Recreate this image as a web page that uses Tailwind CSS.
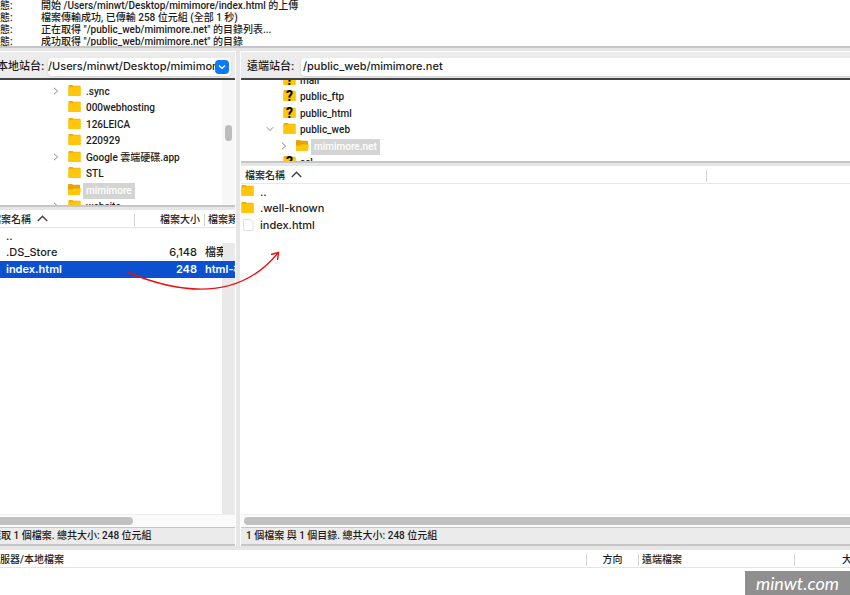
<!DOCTYPE html>
<html lang="zh-Hant">
<head>
    <meta charset="UTF-8">
    <meta name="viewport" content="width=device-width, initial-scale=1.0">
    <title>FileZilla</title>
    <script src="https://cdn.jsdelivr.net/npm/@tailwindcss/browser@4"></script>
</head>
<body class="h-screen overflow-hidden bg-white font-['Roboto','Noto_Sans_CJK_TC',sans-serif] text-[10px] font-medium text-[#1c1c1c]">
    <!-- icons -->
    <svg class="hidden">
        <symbol id="folder" viewBox="0 0 12 12">
            <path d="M0 .8Q0 0 .8 0H4L5 .8H11.400Q12 .8 12 1.400V10.600Q12 11 11.600 11H.4Q0 11 0 10.600Z" fill="#f0b000"/>
            <path d="M0 2.200H4.400L5.400 1.500H12V10.600Q12 11 11.600 11H.4Q0 11 0 10.600Z" fill="#ffc60a"/>
        </symbol>
        <symbol id="folder-open" viewBox="0 0 13 12">
            <path d="M0 .8Q0 0 .8 0H4L5 .8H11.400Q12 .8 12 1.400V11H0Z" fill="#e5a50a"/>
            <path d="M0 5.500H4.600L5.600 4.500H13L12 10.500Q11.900 11 11.400 11H.4Q0 11 0 10.600Z" fill="#ffc60a"/>
        </symbol>
        <symbol id="right" viewBox="0 0 8 8">
            <path d="M2 .8L5.6 4L2 7.2" fill="none" stroke="#8a8a8a" stroke-width="1"/>
        </symbol>
        <symbol id="down" viewBox="0 0 8 8">
            <path d="M.8 2.2L4 5.6L7.2 2.2" fill="none" stroke="#8a8a8a" stroke-width="1"/>
        </symbol>
        <symbol id="sort" viewBox="0 0 11 7">
            <path d="M.8 6L5.5 1.2L10.2 6" fill="none" stroke="#444" stroke-width="1.5"/>
        </symbol>
    </svg>

    <main class="-mr-4 -ml-2.5 flex h-full flex-col">
        <!-- log -->
        <ul class="h-[46px] shrink-0 overflow-hidden leading-3">
            <li class="flex"><span class="w-[51px]">狀態:</span>開始 /Users/minwt/Desktop/mimimore/index.html 的上傳</li>
            <li class="flex"><span class="w-[51px]">狀態:</span>檔案傳輸成功, 已傳輸 258 位元組 (全部 1 秒)</li>
            <li class="flex"><span class="w-[51px]">狀態:</span>正在取得 "/public_web/mimimore.net" 的目錄列表...</li>
            <li class="flex"><span class="w-[51px]">狀態:</span>成功取得 "/public_web/mimimore.net" 的目錄</li>
        </ul>

        <div class="flex min-h-0 flex-1 border-t-2 border-[#c6c6c6] bg-[#e6e6e6] pt-[3px]">
            <!-- local -->
            <section class="flex w-[246px] shrink-0 flex-col border-r border-white">
                <div class="flex h-[27px] shrink-0 items-center border-t border-white bg-[#ececec] pt-[3px] font-['Inter','Noto_Sans_CJK_TC',sans-serif] text-[11px]">
                    <label for="local" class="w-[56px] shrink-0 pl-[7px] whitespace-nowrap">本地站台:</label>
                    <div class="relative ml-0.5 h-[18px] w-[183px] rounded bg-white shadow-sm">
                        <select id="local" class="h-full w-[170px] appearance-none overflow-hidden bg-transparent text-[11px]">
                            <option>/Users/minwt/Desktop/mimimore</option>
                        </select>
                        <span class="pointer-events-none absolute top-0.5 right-0.5 flex size-3.5 items-center justify-center rounded bg-[#0a7aff]">
                            <svg class="size-2" viewBox="0 0 8 8"><path d="M1 2.6L4 5.4L7 2.6" fill="none" stroke="#fff" stroke-width="1.4"/></svg>
                        </span>
                    </div>
                </div>
                <div class="flex h-[129px] shrink-0 overflow-hidden border-t-2 border-b-2 border-t-[#444] border-b-[#c6c6c6] bg-white">
                    <ul class="flex h-[135px] flex-1 flex-col justify-between pt-1 pl-[62px] leading-4">
                        <li class="flex h-4 items-center"><svg class="mr-2 mb-0.5 size-2"><use href="#right"/></svg><svg class="mr-[5px] mb-0.5 h-3 w-[13px]"><use href="#folder"/></svg>.sync</li>
                        <li class="flex h-4 items-center pl-4"><svg class="mr-[5px] mb-0.5 h-3 w-[13px]"><use href="#folder"/></svg>000webhosting</li>
                        <li class="flex h-4 items-center pl-4"><svg class="mr-[5px] mb-0.5 h-3 w-[13px]"><use href="#folder"/></svg>126LEICA</li>
                        <li class="flex h-4 items-center pl-4"><svg class="mr-[5px] mb-0.5 h-3 w-[13px]"><use href="#folder"/></svg>220929</li>
                        <li class="flex h-4 items-center"><svg class="mr-2 mb-0.5 size-2"><use href="#right"/></svg><svg class="mr-[5px] mb-0.5 h-3 w-[13px]"><use href="#folder"/></svg>Google 雲端硬碟.app</li>
                        <li class="flex h-4 items-center pl-4"><svg class="mr-[5px] mb-0.5 h-3 w-[13px]"><use href="#folder"/></svg>STL</li>
                        <li class="flex h-4 items-center pl-4"><svg class="mr-0.5 mb-0.5 h-3 w-[13px]"><use href="#folder-open"/></svg><span class="bg-[#d4d4d4] px-[3px] text-white">mimimore</span></li>
                        <li class="flex h-4 items-center"><svg class="mr-2 mb-0.5 size-2"><use href="#right"/></svg><svg class="mr-[5px] mb-0.5 h-3 w-[13px]"><use href="#folder"/></svg>website</li>
                    </ul>
                    <div class="w-[13px] bg-[#f7f7f7] px-[3px] pt-[45px]"><div class="h-4 rounded-full bg-[#bcbcbc]"></div></div>
                </div>
                <div class="relative mt-[3px] flex-1 overflow-hidden bg-white">
                    <div class="absolute top-[33px] right-0 bottom-0 w-[13px] bg-[#e9e9e9]"></div>
                    <table class="relative w-full table-fixed text-left whitespace-nowrap">
                        <thead>
                            <tr class="h-[17px] border-b border-[#e4e4e4] bg-white">
                                <th class="w-[145px] pt-[3px] pl-px font-medium"><div class="flex items-center gap-1.5 border-r border-[#d4d4d4] leading-3">檔案名稱 <svg class="mb-0.5 h-[7px] w-[11px]"><use href="#sort"/></svg></div></th>
                                <th class="w-[70px] pt-[3px] text-right font-medium"><div class="border-r border-[#d4d4d4] pr-1 leading-3">檔案大小</div></th>
                                <th class="overflow-hidden pt-[3px] pl-[3px] leading-3 font-medium">檔案類型</th>
                            </tr>
                        </thead>
                        <tbody class="font-['Inter','Noto_Sans_CJK_TC',sans-serif] text-[11px]">
                            <tr class="h-[17px]"><td class="pl-4">..</td><td></td><td></td></tr>
                            <tr class="h-[17px]"><td class="pl-4">.DS_Store</td><td class="pr-2 text-right">6,148</td><td><div class="w-[18px] overflow-hidden">檔案</div></td></tr>
                            <tr class="h-[17px] bg-[#0a50d0] font-semibold text-white"><td class="pl-4">index.html</td><td class="pr-2 text-right">248</td><td class="overflow-hidden">html-檔案</td></tr>
                        </tbody>
                    </table>
                </div>
                <div class="h-[13px] shrink-0 border-t border-[#ececec] bg-[#fafafa] pt-0.5"><div class="h-2 w-[143px] rounded-full bg-[#c1c1c1]"></div></div>
                <p class="h-[19px] shrink-0 border-t border-b-2 border-[#c6c6c6] bg-[#ebebeb] pl-px leading-4">選取 1 個檔案. 總共大小: 248 位元組</p>
            </section>

            <!-- remote -->
            <section class="ml-1 flex min-w-0 flex-1 flex-col border-l border-white">
                <div class="flex h-[27px] shrink-0 items-center border-t border-white bg-[#ececec] pt-[3px] font-['Inter','Noto_Sans_CJK_TC',sans-serif] text-[11px]">
                    <label for="remote" class="w-[60px] shrink-0 pl-1.5 whitespace-nowrap">遠端站台:</label>
                    <select id="remote" class="h-[18px] flex-1 appearance-none rounded bg-white pl-0.5 text-[11px] shadow-sm">
                        <option>/public_web/mimimore.net</option>
                    </select>
                </div>
                <div class="h-[85px] shrink-0 overflow-hidden border-t-2 border-b-2 border-t-[#444] border-b-[#c6c6c6] bg-white">
                    <ul class="-mt-[7px] flex h-[98px] flex-col justify-between pl-[25px] leading-4">
                        <li class="flex h-4 items-center pl-[17px]"><span class="relative mr-1 mb-0.5 flex"><svg class="h-3 w-[13px]"><use href="#folder"/></svg><b class="absolute inset-0 text-center text-sm leading-3 text-black">?</b></span>mail</li>
                        <li class="flex h-4 items-center pl-[17px]"><span class="relative mr-1 mb-0.5 flex"><svg class="h-3 w-[13px]"><use href="#folder"/></svg><b class="absolute inset-0 text-center text-sm leading-3 text-black">?</b></span>public_ftp</li>
                        <li class="flex h-4 items-center pl-[17px]"><span class="relative mr-1 mb-0.5 flex"><svg class="h-3 w-[13px]"><use href="#folder"/></svg><b class="absolute inset-0 text-center text-sm leading-3 text-black">?</b></span>public_html</li>
                        <li class="flex h-4 items-center"><svg class="mr-[9px] mb-0.5 size-2"><use href="#down"/></svg><svg class="mr-1 mb-0.5 h-3 w-[13px]"><use href="#folder"/></svg>public_web</li>
                        <li class="flex h-4 items-center pl-3.5"><svg class="mr-2 mb-0.5 size-2"><use href="#right"/></svg><svg class="mr-0.5 mb-0.5 h-3 w-[13px]"><use href="#folder-open"/></svg><span class="bg-[#d4d4d4] px-[3px] text-white">mimimore.net</span></li>
                        <li class="flex h-4 items-center pl-[17px]"><span class="relative mr-1 mb-0.5 flex"><svg class="h-3 w-[13px]"><use href="#folder"/></svg><b class="absolute inset-0 text-center text-sm leading-3 text-black">?</b></span>ssl</li>
                    </ul>
                </div>
                <div class="mt-[3px] flex-1 overflow-hidden bg-white">
                    <table class="w-full table-fixed text-left whitespace-nowrap">
                        <thead>
                            <tr class="h-[17px] border-b border-[#e8e8e8]">
                                <th class="w-[466px] pt-[3px] pl-1 font-medium"><div class="flex items-center gap-1.5 border-r border-[#d4d4d4] leading-3">檔案名稱 <svg class="mb-0.5 h-[7px] w-[11px]"><use href="#sort"/></svg></div></th>
                                <th></th>
                            </tr>
                        </thead>
                        <tbody class="font-['Inter','Noto_Sans_CJK_TC',sans-serif] text-[11px]">
                            <tr class="h-[17px]"><td><div class="flex items-center gap-1.5"><svg class="mb-0.5 h-3 w-[13px]"><use href="#folder"/></svg>..</div></td><td></td></tr>
                            <tr class="h-[17px]"><td><div class="flex items-center gap-1.5"><svg class="mb-0.5 h-3 w-[13px]"><use href="#folder"/></svg>.well-known</div></td><td></td></tr>
                            <tr class="h-[17px]"><td><div class="flex items-center gap-1.5"><svg class="mb-0.5 h-3 w-[13px]" viewBox="0 0 13 12"><path d="M2.5 .5H9.500L12 3V11.5H2.5Z" fill="#fff" stroke="#e2e2e2"/></svg>index.html</div></td><td></td></tr>
                        </tbody>
                    </table>
                </div>
                <div class="h-[13px] shrink-0 border-t border-[#ececec] bg-[#fafafa] pt-0.5 pl-[3px]"><div class="h-2 rounded-full bg-[#c1c1c1]"></div></div>
                <p class="h-[19px] shrink-0 border-t border-b-2 border-[#c6c6c6] bg-[#ebebeb] pl-[5px] leading-4">1 個檔案 與 1 個目錄. 總共大小: 248 位元組</p>
            </section>
        </div>

        <!-- queue -->
        <div class="h-[49px] shrink-0 border-t-4 border-[#e6e6e6]">
            <table class="w-full table-fixed text-left whitespace-nowrap">
                <thead>
                    <tr class="h-[17px] border-b border-[#e4e4e4]">
                        <th class="pt-[3px] font-medium"><div class="border-r border-[#d4d4d4] leading-3">伺服器/本地檔案</div></th>
                        <th class="w-[52px] pt-[3px] text-center font-medium"><div class="border-r border-[#d4d4d4] leading-3">方向</div></th>
                        <th class="w-[156px] pt-[3px] pl-[3px] font-medium"><div class="border-r border-[#d4d4d4] leading-3">遠端檔案</div></th>
                        <th class="w-[71px] pt-[3px] pr-1 text-right leading-3 font-medium">大小</th>
                    </tr>
                </thead>
            </table>
        </div>
    </main>

    <!-- drag arrow -->
    <svg class="pointer-events-none absolute top-[248px] left-[126px] h-11 w-40" viewBox="0 0 160 44" fill="none" stroke="#e81010" stroke-width="1.4">
        <path d="M1 24Q102 66 152 5"/>
        <path d="M145 6.5L152.500 4.500L151.500 12"/>
    </svg>

    <!-- watermark -->
    <a href="#" class="absolute right-0 bottom-0 flex h-6 w-[105px] items-center justify-center bg-[#8f8f8f] font-['Lato',sans-serif] text-lg font-normal text-white italic">minwt.com</a>
</body>
</html>
